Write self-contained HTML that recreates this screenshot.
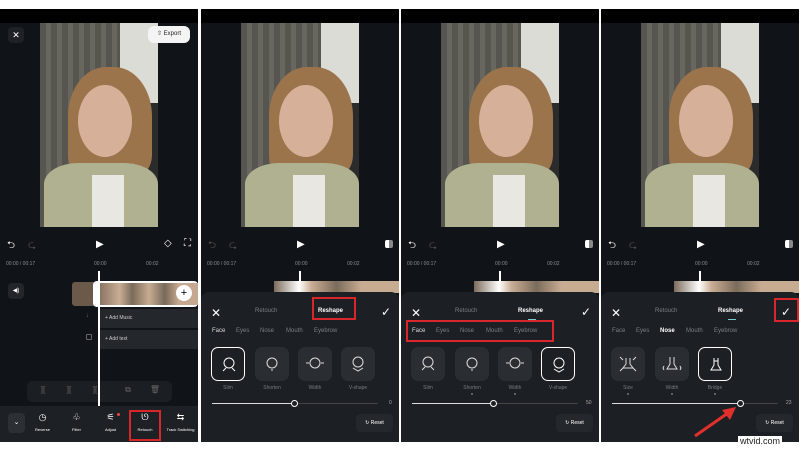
<!DOCTYPE html><html><head><meta charset="utf-8"><style>
*{margin:0;padding:0;box-sizing:border-box}
body{width:800px;height:450px;background:#fff;position:relative;overflow:hidden;font-family:"Liberation Sans",sans-serif;color:#fff}
.p{position:absolute;top:9px;width:198px;height:433px;background:#101317;overflow:hidden}
.p>*{position:absolute}
.blk{left:0;top:0;width:198px;height:14px;background:#000}
.ph{top:14px;width:118px;height:204px;overflow:hidden;background:#5f5e59}
.ph>*{position:absolute}
.t{font-size:5px;color:#8a8d93}
.sheet{left:0;top:283px;width:198px;height:150px;background:#1c1f23;border-radius:8px 8px 0 0}
.sheet>*{position:absolute}
.it{width:34px;height:34px;border-radius:7px;background:#2a2d32;top:55px}
.it.s{border:1.5px solid #fff;background:#1c1f23}
.it svg{position:absolute;left:7px;top:7px}
.lb{font-size:5px;color:#777b82;top:93px;width:34px;text-align:center}
.dt{top:101px;width:2px;height:2px;background:#777;border-radius:50%}
.tab{font-size:6px;color:#7b7f86;top:36px}
.red{border:2px solid #d9262b}
.tb{width:22px;height:14px;color:#666;font-size:8px;text-align:center;top:376px}
</style></head><body>
<div class="p" style="left:0">
<div class="blk"></div>
<div class="ph" style="left:40px"><div style="left:80px;top:0;width:38px;height:80px;background:#dcdcd7"></div><div style="left:0;top:0;width:80px;height:204px;background:repeating-linear-gradient(90deg,#565550 0 6px,#67665f 6px 11px)"></div><div style="left:80px;top:80px;width:38px;height:124px;background:#2a2b2a"></div><div style="left:28px;top:44px;width:84px;height:110px;border-radius:45% 45% 20% 20%;background:#9c744c"></div><div style="left:38px;top:62px;width:54px;height:72px;border-radius:50%;background:#d6b098"></div><div style="left:4px;top:140px;width:114px;height:70px;border-radius:30% 30% 0 0;background:#b0b190"></div><div style="left:52px;top:152px;width:32px;height:52px;background:#e9e7e1"></div></div>
<div style="left:8px;top:18px;width:16px;height:16px;border-radius:4px;background:#1e2126;font-size:9px;text-align:center;line-height:16px">✕</div>
<div style="left:148px;top:17px;width:42px;height:17px;border-radius:6px;background:#f4f4f4;color:#222;font-size:6px;line-height:17px;text-align:center">⇧ Export</div>
<div style="left:7px;top:229px;font-size:10px">⮌</div><div style="left:28px;top:229px;font-size:10px;color:#555">⮎</div>
<div style="left:96px;top:230px;font-size:10px">▶</div><div style="left:164px;top:229px;font-size:10px">◇</div><div style="left:184px;top:229px;font-size:10px">⛶</div>
<div class="t" style="left:6px;top:252px">00:00 / 00:17</div><div class="t" style="left:94px;top:252px">00:00</div><div class="t" style="left:146px;top:252px">00:02</div>
<div style="left:72px;top:273px;width:22px;height:24px;background:#6b5a4a;border-radius:3px 0 0 3px"></div>
<div style="left:93px;top:272px;width:105px;height:26px;background:#fff;border-radius:4px"></div>
<div style="left:100px;top:274px;width:98px;height:22px;background:linear-gradient(90deg,#8a7663,#c9ad94 20%,#7b6b5b 33%,#c8ac92 50%,#786a5a 66%,#c4a88f 80%)"></div>
<div style="left:176px;top:276px;width:16px;height:16px;border-radius:50%;background:#fff;color:#000;font-size:11px;text-align:center;line-height:16px">+</div>
<div style="left:8px;top:274px;width:16px;height:16px;border-radius:4px;background:#22252a;font-size:6px;text-align:center;line-height:16px">◀)</div>
<div style="left:86px;top:303px;font-size:7px;color:#666">♩</div>
<div style="left:86px;top:325px;width:6px;height:6px;border:1px solid #666;border-radius:1px"></div>
<div style="left:100px;top:300px;width:98px;height:19px;background:#24272c;font-size:5px;line-height:19px;padding-left:5px;color:#ccc">+ Add Music</div>
<div style="left:100px;top:321px;width:98px;height:19px;background:#24272c;font-size:5px;line-height:19px;padding-left:5px;color:#ccc">+ Add text</div>
<div style="left:27px;top:372px;width:145px;height:21px;border-radius:5px;background:#1b1e22"></div>
<div class="tb" style="left:32px">][</div><div class="tb" style="left:58px">][</div><div class="tb" style="left:84px">][</div><div class="tb" style="left:117px">⧉</div><div class="tb" style="left:144px">🗑</div>
<div style="left:98px;top:262px;width:2px;height:171px;background:#fff"></div>
<div style="left:0;top:397px;width:198px;height:36px;background:#1d2024"></div>
<div style="left:8px;top:404px;width:17px;height:20px;border-radius:4px;background:#2c2f34;font-size:7px;text-align:center;line-height:20px">⌄</div>
<div style="left:30px;top:403px;width:25px;text-align:center;font-size:9px">◷<br><span style="font-size:4px">Reverse</span></div>
<div style="left:64px;top:403px;width:25px;text-align:center;font-size:9px">♧<br><span style="font-size:4px">Filter</span></div>
<div style="left:98px;top:403px;width:25px;text-align:center;font-size:9px">⚟<br><span style="font-size:4px">Adjust</span></div>
<div style="left:117px;top:404px;width:3px;height:3px;border-radius:50%;background:#e44"></div>
<div class="red" style="left:129px;top:401px;width:32px;height:31px"></div>
<div style="left:131px;top:403px;width:28px;text-align:center;font-size:9px">ᘎ<br><span style="font-size:4px">Retouch</span></div>
<div style="left:163px;top:403px;width:35px;text-align:center;font-size:9px">⇆<br><span style="font-size:4px">Track Switching</span></div>
</div>

<div class="p" style="left:201px">
<div class="blk"></div>
<div class="ph" style="left:40px"><div style="left:80px;top:0;width:38px;height:80px;background:#dcdcd7"></div><div style="left:0;top:0;width:80px;height:204px;background:repeating-linear-gradient(90deg,#565550 0 6px,#67665f 6px 11px)"></div><div style="left:80px;top:80px;width:38px;height:124px;background:#2a2b2a"></div><div style="left:28px;top:44px;width:84px;height:110px;border-radius:45% 45% 20% 20%;background:#9c744c"></div><div style="left:38px;top:62px;width:54px;height:72px;border-radius:50%;background:#d6b098"></div><div style="left:4px;top:140px;width:114px;height:70px;border-radius:30% 30% 0 0;background:#b0b190"></div><div style="left:52px;top:152px;width:32px;height:52px;background:#e9e7e1"></div></div>
<div style="left:7px;top:229px;font-size:10px;color:#555">⮌</div><div style="left:28px;top:229px;font-size:10px;color:#555">⮎</div><div style="left:96px;top:230px;font-size:10px">▶</div><div style="left:184px;top:231px;width:8px;height:8px;background:linear-gradient(90deg,#fff 50%,#888 50%);border-radius:2px"></div>
<div class="t" style="left:6px;top:252px">00:00 / 00:17</div><div class="t" style="left:94px;top:252px">00:00</div><div class="t" style="left:146px;top:252px">00:02</div>
<div style="left:98px;top:262px;width:2px;height:12px;background:#fff"></div>
<div style="left:73px;top:272px;width:125px;height:12px;background:linear-gradient(90deg,#7b6b5b,#fff 20%,#c9ad94 30%,#7b6b5b 50%,#c8ac92 70%)"></div>
<div class="sheet"><div style="left:10px;top:14px;font-size:12px">✕</div><div style="left:54px;top:16px;font-size:6px;color:#7b7f86">Retouch</div><div style="left:117px;top:16px;font-size:6px;font-weight:bold">Reshape</div><div style="left:127px;top:27px;width:8px;height:1px;background:#7cc"></div><div class="red" style="left:111px;top:5px;width:44px;height:23px"></div><div style="left:180px;top:13px;font-size:12px">✓</div>
<div class="tab" style="left:11px;color:#ddd">Face</div><div class="tab" style="left:35px">Eyes</div><div class="tab" style="left:59px">Nose</div><div class="tab" style="left:85px">Mouth</div><div class="tab" style="left:113px">Eyebrow</div>
<div class="it s" style="left:10px"><svg width="20" height="20" fill="none" stroke="#fff" stroke-width="1"><circle cx="10" cy="8" r="5"/><path d="M4 16l3-3M16 16l-3-3"/></svg></div><div class="it" style="left:54px"><svg width="20" height="20" fill="none" stroke="#ddd" stroke-width="1"><circle cx="10" cy="9" r="5"/><path d="M9 16h2"/></svg></div><div class="it" style="left:97px"><svg width="20" height="20" fill="none" stroke="#ddd" stroke-width="1"><circle cx="10" cy="9" r="5"/><path d="M1 9h3M16 9h3"/></svg></div><div class="it" style="left:140px"><svg width="20" height="20" fill="none" stroke="#ddd" stroke-width="1"><circle cx="10" cy="8" r="5"/><path d="M5 14l5 3 5-3"/></svg></div>
<div class="lb" style="left:10px">Slim</div><div class="lb" style="left:54px">Shorten</div><div class="lb" style="left:97px">Width</div><div class="lb" style="left:140px">V-shape</div>
<div style="left:11px;top:111px;width:166px;height:1px;background:#444"></div><div style="left:11px;top:111px;width:82px;height:1px;background:#ddd"></div><div style="left:90px;top:108px;width:7px;height:7px;border-radius:50%;background:#1c1f23;border:1px solid #fff"></div><div style="left:188px;top:108px;font-size:5px;color:#aaa">0</div>
<div style="left:155px;top:122px;width:37px;height:18px;border-radius:4px;background:#24272c;font-size:5px;line-height:18px;text-align:center">↻ Reset</div></div>
</div>

<div class="p" style="left:401px">
<div class="blk"></div>
<div class="ph" style="left:40px"><div style="left:80px;top:0;width:38px;height:80px;background:#dcdcd7"></div><div style="left:0;top:0;width:80px;height:204px;background:repeating-linear-gradient(90deg,#565550 0 6px,#67665f 6px 11px)"></div><div style="left:80px;top:80px;width:38px;height:124px;background:#2a2b2a"></div><div style="left:28px;top:44px;width:84px;height:110px;border-radius:45% 45% 20% 20%;background:#9c744c"></div><div style="left:38px;top:62px;width:54px;height:72px;border-radius:50%;background:#d6b098"></div><div style="left:4px;top:140px;width:114px;height:70px;border-radius:30% 30% 0 0;background:#b0b190"></div><div style="left:52px;top:152px;width:32px;height:52px;background:#e9e7e1"></div></div>
<div style="left:7px;top:229px;font-size:10px">⮌</div><div style="left:28px;top:229px;font-size:10px;color:#555">⮎</div><div style="left:96px;top:230px;font-size:10px">▶</div><div style="left:184px;top:231px;width:8px;height:8px;background:linear-gradient(90deg,#fff 50%,#888 50%);border-radius:2px"></div>
<div class="t" style="left:6px;top:252px">00:00 / 00:17</div><div class="t" style="left:94px;top:252px">00:00</div><div class="t" style="left:146px;top:252px">00:02</div>
<div style="left:98px;top:262px;width:2px;height:12px;background:#fff"></div>
<div style="left:73px;top:272px;width:125px;height:12px;background:linear-gradient(90deg,#7b6b5b,#fff 20%,#c9ad94 30%,#7b6b5b 50%,#c8ac92 70%)"></div>
<div class="sheet"><div style="left:10px;top:14px;font-size:12px">✕</div><div style="left:54px;top:16px;font-size:6px;color:#7b7f86">Retouch</div><div style="left:117px;top:16px;font-size:6px;font-weight:bold">Reshape</div><div style="left:127px;top:27px;width:8px;height:1px;background:#7cc"></div><div style="left:180px;top:13px;font-size:12px">✓</div>
<div class="tab" style="left:11px;color:#ddd">Face</div><div class="tab" style="left:35px">Eyes</div><div class="tab" style="left:59px">Nose</div><div class="tab" style="left:85px">Mouth</div><div class="tab" style="left:113px">Eyebrow</div>
<div class="red" style="left:5px;top:28px;width:148px;height:22px"></div>
<div class="it" style="left:10px"><svg width="20" height="20" fill="none" stroke="#ddd" stroke-width="1"><circle cx="10" cy="8" r="5"/><path d="M4 16l3-3M16 16l-3-3"/></svg></div><div class="it" style="left:54px"><svg width="20" height="20" fill="none" stroke="#ddd" stroke-width="1"><circle cx="10" cy="9" r="5"/><path d="M9 16h2"/></svg></div><div class="it" style="left:97px"><svg width="20" height="20" fill="none" stroke="#ddd" stroke-width="1"><circle cx="10" cy="9" r="5"/><path d="M1 9h3M16 9h3"/></svg></div><div class="it s" style="left:140px"><svg width="20" height="20" fill="none" stroke="#fff" stroke-width="1"><circle cx="10" cy="8" r="5"/><path d="M5 14l5 3 5-3"/></svg></div>
<div class="lb" style="left:10px">Slim</div><div class="lb" style="left:54px">Shorten</div><div class="lb" style="left:97px">Width</div><div class="lb" style="left:140px">V-shape</div>
<div class="dt" style="left:70px"></div><div class="dt" style="left:113px"></div>
<div style="left:11px;top:111px;width:166px;height:1px;background:#444"></div><div style="left:11px;top:111px;width:82px;height:1px;background:#ddd"></div><div style="left:89px;top:108px;width:7px;height:7px;border-radius:50%;background:#1c1f23;border:1px solid #fff"></div><div style="left:185px;top:108px;font-size:5px;color:#aaa">50</div>
<div style="left:155px;top:122px;width:37px;height:18px;border-radius:4px;background:#24272c;font-size:5px;line-height:18px;text-align:center">↻ Reset</div></div>
</div>

<div class="p" style="left:601px">
<div class="blk"></div>
<div class="ph" style="left:40px"><div style="left:80px;top:0;width:38px;height:80px;background:#dcdcd7"></div><div style="left:0;top:0;width:80px;height:204px;background:repeating-linear-gradient(90deg,#565550 0 6px,#67665f 6px 11px)"></div><div style="left:80px;top:80px;width:38px;height:124px;background:#2a2b2a"></div><div style="left:28px;top:44px;width:84px;height:110px;border-radius:45% 45% 20% 20%;background:#9c744c"></div><div style="left:38px;top:62px;width:54px;height:72px;border-radius:50%;background:#d6b098"></div><div style="left:4px;top:140px;width:114px;height:70px;border-radius:30% 30% 0 0;background:#b0b190"></div><div style="left:52px;top:152px;width:32px;height:52px;background:#e9e7e1"></div></div>
<div style="left:7px;top:229px;font-size:10px">⮌</div><div style="left:28px;top:229px;font-size:10px;color:#555">⮎</div><div style="left:96px;top:230px;font-size:10px">▶</div><div style="left:184px;top:231px;width:8px;height:8px;background:linear-gradient(90deg,#fff 50%,#888 50%);border-radius:2px"></div>
<div class="t" style="left:6px;top:252px">00:00 / 00:17</div><div class="t" style="left:94px;top:252px">00:00</div><div class="t" style="left:146px;top:252px">00:02</div>
<div style="left:98px;top:262px;width:2px;height:12px;background:#fff"></div>
<div style="left:73px;top:272px;width:125px;height:12px;background:linear-gradient(90deg,#7b6b5b,#fff 20%,#c9ad94 30%,#7b6b5b 50%,#c8ac92 70%)"></div>
<div class="sheet"><div style="left:10px;top:14px;font-size:12px">✕</div><div style="left:54px;top:16px;font-size:6px;color:#7b7f86">Retouch</div><div style="left:117px;top:16px;font-size:6px;font-weight:bold">Reshape</div><div style="left:127px;top:27px;width:8px;height:1px;background:#7cc"></div><div style="left:180px;top:13px;font-size:12px">✓</div><div class="red" style="left:173px;top:6px;width:25px;height:24px"></div>
<div class="tab" style="left:11px">Face</div><div class="tab" style="left:35px">Eyes</div><div class="tab" style="left:59px;color:#fff;font-weight:bold">Nose</div><div class="tab" style="left:85px">Mouth</div><div class="tab" style="left:113px">Eyebrow</div>
<div class="it" style="left:10px"><svg width="20" height="20" fill="none" stroke="#ddd" stroke-width="1"><path d="M8 4v6l-3 4h10l-3-4V4M2 3l3 3M18 3l-3 3M2 17l3-3M18 17l-3-3"/></svg></div><div class="it" style="left:54px"><svg width="20" height="20" fill="none" stroke="#ddd" stroke-width="1"><path d="M8 3v7l-3 5h10l-3-5V3M2 12l-1 2 1 2M18 12l1 2-1 2"/></svg></div><div class="it s" style="left:97px"><svg width="20" height="20" fill="none" stroke="#fff" stroke-width="1"><path d="M8 3v7l-3 5h10l-3-5V3M8 6h4"/></svg></div>
<div class="lb" style="left:10px">Size</div><div class="lb" style="left:54px">Width</div><div class="lb" style="left:97px">Bridge</div>
<div class="dt" style="left:26px"></div><div class="dt" style="left:70px"></div><div class="dt" style="left:113px"></div>
<div style="left:11px;top:111px;width:166px;height:1px;background:#444"></div><div style="left:11px;top:111px;width:128px;height:1px;background:#ddd"></div><div style="left:136px;top:108px;width:7px;height:7px;border-radius:50%;background:#1c1f23;border:1px solid #fff"></div><div style="left:185px;top:108px;font-size:5px;color:#aaa">23</div>
<div style="left:155px;top:122px;width:37px;height:18px;border-radius:4px;background:#24272c;font-size:5px;line-height:18px;text-align:center">↻ Reset</div></div>
</div>
<svg style="position:absolute;left:0;top:0" width="800" height="450"><line x1="695" y1="436" x2="728" y2="413" stroke="#e0302c" stroke-width="3"/><polygon points="736,407 722,410 730,420" fill="#e0302c"/></svg>
<div style="position:absolute;left:738px;top:436px;font-size:9px;color:#222;background:#fff;padding:0 2px">wtvid.com</div>
</body></html>
